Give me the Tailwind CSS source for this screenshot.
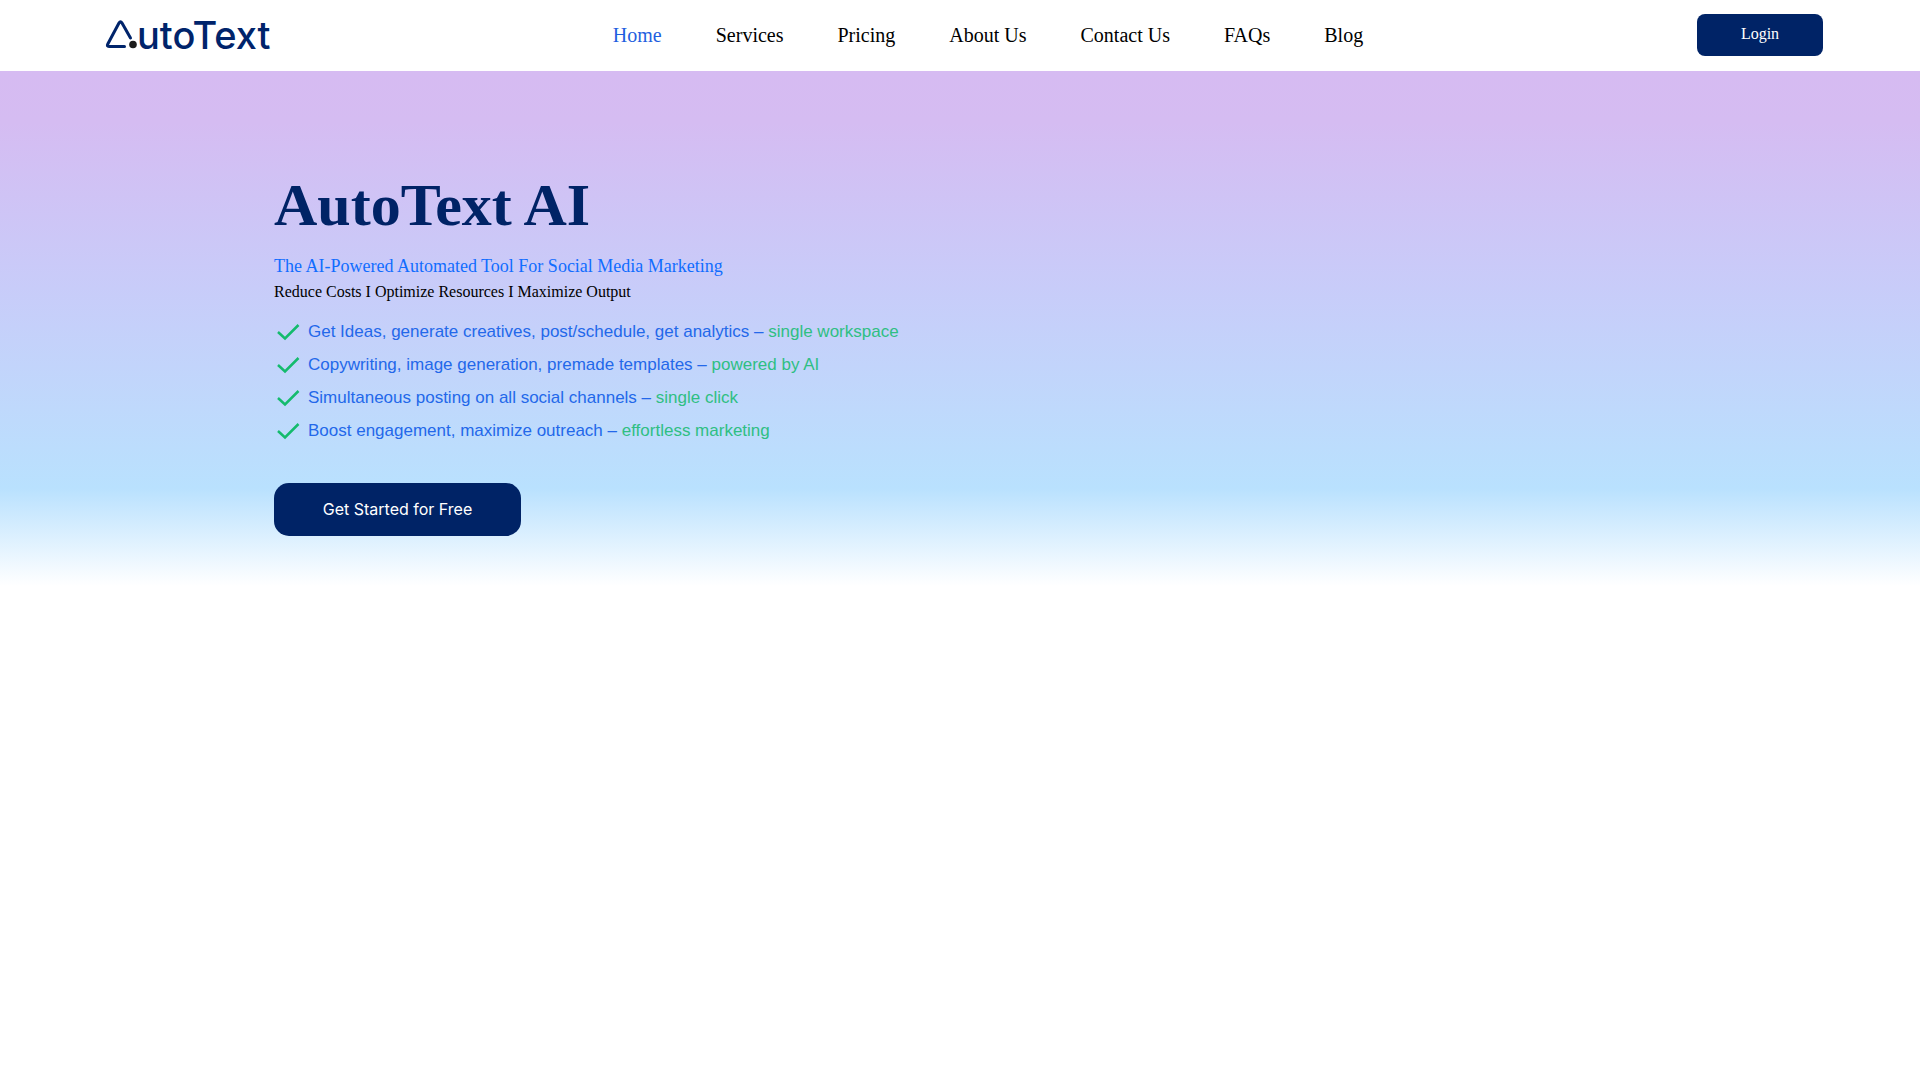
<!DOCTYPE html>
<html lang="en">
<head>
    <meta charset="UTF-8">
    <meta name="viewport" content="width=device-width, initial-scale=1.0">
    <title>AutoText AI</title>
    <script src="https://cdn.jsdelivr.net/npm/@tailwindcss/browser@4"></script>
</head>
<body class="bg-white min-h-screen font-['Liberation_Serif',serif] text-black">
    <header class="flex items-center justify-between h-[71px] pb-[2px] pl-[105px] pr-[97px] bg-white">
        <!-- Logo -->
        <a href="#" aria-label="AutoText" class="flex items-center w-[190px] text-[#00246b]">
            <svg class="w-8 h-8 shrink-0" viewBox="0 0 32 32" fill="none">
                <path d="M19.500 27.500H4Q1.500 27.500 2.800 25L14 4Q15.500 1.500 17 4L25.500 19" stroke="currentColor" stroke-width="3" stroke-linecap="round" stroke-linejoin="round"/>
                <circle cx="28" cy="25.500" r="3.800" fill="#1c1c1c"/>
            </svg>
            <span class="font-['Inter',sans-serif] font-medium text-[38px] leading-8">utoText</span>
        </a>

        <nav class="flex gap-[54px] pl-12 text-[20px] leading-6">
            <a href="#" class="text-[#1f5fe0]">Home</a>
            <a href="#">Services</a>
            <a href="#">Pricing</a>
            <a href="#">About Us</a>
            <a href="#">Contact Us</a>
            <a href="#">FAQs</a>
            <a href="#">Blog</a>
        </nav>

        <div class="flex justify-end w-[190px]">
            <button class="w-[126px] h-[42px] pb-[2px] rounded-lg bg-[#002366] text-white text-base">Login</button>
        </div>
    </header>

    <main>
        <!-- Hero -->
        <section class="bg-linear-[180deg,#d6bbf2_0%,#d5bcf2_10%,#c8ccf9_42%,#b9e1fe_81%,#ffffff_100%] px-[274px] pt-[99px] pb-[50px]">
            <h1 class="text-[60px] leading-[70px] font-bold text-[#002366]">AutoText AI</h1>
            <p class="mt-[14px] text-[18px] leading-6 text-[#116dff]">The AI-Powered Automated Tool For Social Media Marketing</p>
            <p class="text-[16px] leading-7">Reduce Costs I Optimize Resources I Maximize Output</p>

            <ul class="mt-[9px] font-['Liberation_Sans',sans-serif] text-[17px] leading-[33px] text-[#2368ea]">
                <li class="flex items-center gap-2">
                    <svg class="w-[26px] h-5" viewBox="0 0 26 20" fill="none"><path d="M4 10l7 6.500L24.500 3" stroke="#14bb6d" stroke-width="2.500"/></svg>
                    <span>Get Ideas, generate creatives, post/schedule, get analytics – <span class="text-[#2fbf83]">single workspace</span></span>
                </li>
                <li class="flex items-center gap-2">
                    <svg class="w-[26px] h-5" viewBox="0 0 26 20" fill="none"><path d="M4 10l7 6.500L24.500 3" stroke="#14bb6d" stroke-width="2.500"/></svg>
                    <span>Copywriting, image generation, premade templates – <span class="text-[#2fbf83]">powered by AI</span></span>
                </li>
                <li class="flex items-center gap-2">
                    <svg class="w-[26px] h-5" viewBox="0 0 26 20" fill="none"><path d="M4 10l7 6.500L24.500 3" stroke="#14bb6d" stroke-width="2.500"/></svg>
                    <span>Simultaneous posting on all social channels – <span class="text-[#2fbf83]">single click</span></span>
                </li>
                <li class="flex items-center gap-2">
                    <svg class="w-[26px] h-5" viewBox="0 0 26 20" fill="none"><path d="M4 10l7 6.500L24.500 3" stroke="#14bb6d" stroke-width="2.500"/></svg>
                    <span>Boost engagement, maximize outreach – <span class="text-[#2fbf83]">effortless marketing</span></span>
                </li>
            </ul>

            <button class="mt-9 w-[247px] h-[53px] pb-[2px] rounded-[15px] bg-[#002366] text-white text-[16px] font-['Inter',sans-serif]">Get Started for Free</button>
        </section>
    </main>
</body>
</html>
